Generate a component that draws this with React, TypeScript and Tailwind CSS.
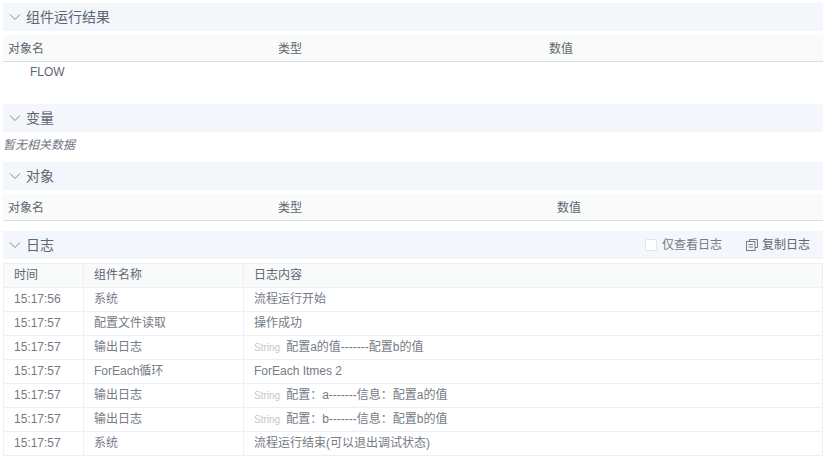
import React from "react";

function Chevron() {
  return (
    <svg width="12" height="12" viewBox="0 0 12 12" className="shrink-0" fill="none" stroke="#7d8a99" strokeWidth="1">
      <path d="M1 3.5 L6 8.5 L11 3.5" />
    </svg>
  );
}

function Header({ title, children }: { title: string; children?: React.ReactNode }) {
  return (
    <div className="flex h-[28px] items-center bg-[#f3f6fb] pl-[6px] pr-[13px] text-[14px] text-[#5f6670]">
      <Chevron />
      <span className="ml-[5px]">{title}</span>
      {children && <div className="ml-auto flex items-center text-[12px]">{children}</div>}
    </div>
  );
}

function ObjectHead({ second, third }: { second: string; third: string }) {
  return (
    <div className="mt-[4px] h-[27px] border-b border-[#dcdfe0] bg-[#f9fafa] text-[12px] leading-[28px] text-[#5f6670]">
      <div className="flex h-full">
        <span className="w-[275px] pl-[5px]">对象名</span>
        <span style={{ width: second }}>类型</span>
        <span>{third}</span>
      </div>
    </div>
  );
}

const rows: [string, string, string | null, string][] = [
  ["15:17:56", "系统", null, "流程运行开始"],
  ["15:17:57", "配置文件读取", null, "操作成功"],
  ["15:17:57", "输出日志", "String", "配置a的值-------配置b的值"],
  ["15:17:57", "ForEach循环", null, "ForEach Itmes 2"],
  ["15:17:57", "输出日志", "String", "配置：a-------信息：配置a的值"],
  ["15:17:57", "输出日志", "String", "配置：b-------信息：配置b的值"],
  ["15:17:57", "系统", null, "流程运行结束(可以退出调试状态)"],
];

export default function App() {
  return (
    <div
      className="h-[459px] w-[826px] overflow-hidden bg-white px-[3px] pt-[3px]"
      style={{ fontFamily: '"Liberation Sans", "Noto Sans CJK SC", sans-serif' }}
    >
      <Header title="组件运行结果" />
      <ObjectHead second="271px" third="数值" />
      <div className="h-[42px] pl-[27px] pt-[3px] text-[12px] leading-[14px] text-[#5f6670]">FLOW</div>

      <Header title="变量" />
      <div className="h-[30px] text-[12px] italic leading-[26px] text-[#6f757f]">暂无相关数据</div>

      <Header title="对象" />
      <ObjectHead second="279px" third="数值" />

      <div className="mt-[10px]">
        <Header title="日志">
          <span className="h-[12px] w-[12px] rounded-[2px] border border-[#e0e3e8] bg-white" />
          <span className="ml-[5px] text-[#757b85]">仅查看日志</span>
          <svg width="12" height="12" viewBox="0 0 12 12" fill="none" stroke="#757b85" strokeWidth="1" className="ml-[24px]">
            <path d="M3.5 2.5 V0.5 H11.5 V8.5 H9" />
            <rect x="0.5" y="2.5" width="8.5" height="9" />
            <path d="M2.5 5.5 H7 M2.5 8 H7" />
          </svg>
          <span className="ml-[4px] text-[#5f6670]">复制日志</span>
        </Header>
      </div>

      <div className="mt-[4px] border-l border-r border-t border-[#eeeff4] text-[12px] text-[#757b85]">
        <div className="flex h-[24px] border-b border-[#eeeff4] bg-[#f9fafa] leading-[23px] text-[#5f6670]">
          <span className="w-[80px] border-r border-[#eeeff4] pl-[10px]">时间</span>
          <span className="w-[160px] border-r border-[#eeeff4] pl-[10px]">组件名称</span>
          <span className="pl-[10px]">日志内容</span>
        </div>
        {rows.map((r, i) => (
          <div key={i} className="flex h-[24px] border-b border-[#eeeff4] leading-[23px]">
            <span className="w-[80px] border-r border-[#eeeff4] pl-[10px]">{r[0]}</span>
            <span className="w-[160px] border-r border-[#eeeff4] pl-[10px]">{r[1]}</span>
            <span className="flex items-center pl-[10px]">
              {r[2] && <span className="mr-[6px] text-[10px] text-[#c6c6c6]">{r[2]}</span>}
              <span>{r[3]}</span>
            </span>
          </div>
        ))}
      </div>
    </div>
  );
}
